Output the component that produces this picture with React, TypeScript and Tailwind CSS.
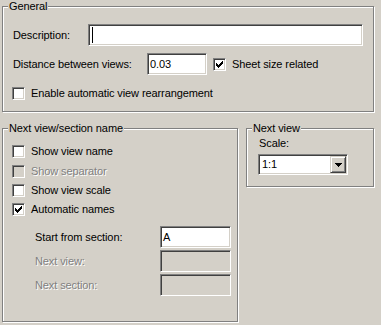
import React from 'react';

const sunken =
  'border border-t-[#808080] border-l-[#808080] border-r-white border-b-white shadow-[inset_1px_1px_0_#404040,inset_-1px_-1px_0_#d4d0c8]';
const etched = 'border border-[#808080] shadow-[inset_1px_1px_0_#fff,1px_1px_0_#fff]';
const disabledText = 'text-[#808080] [text-shadow:1px_1px_0_#fff]';

const Group: React.FC<{ title: string; className?: string; children?: React.ReactNode }> = ({
  title,
  className = '',
  children,
}) => (
  <div className={`relative shrink-0 ${etched} ${className}`}>
    <span className="absolute left-[5px] top-[-7px] px-[1px] bg-[#d4d0c8] leading-[13px]">{title}</span>
    {children}
  </div>
);

const Checkbox: React.FC<{ checked?: boolean; disabled?: boolean; label: string; className?: string }> = ({
  checked,
  disabled,
  label,
  className = '',
}) => (
  <div className={`flex items-center h-[13px] ${className}`}>
    <div className={`relative w-[13px] h-[13px] shrink-0 ${sunken} ${disabled ? 'bg-[#d4d0c8]' : 'bg-white'}`}>
      {checked && (
        <svg className="absolute left-0 top-0" width="11" height="11" viewBox="0 0 11 11" shapeRendering="crispEdges">
          <rect x="2" y="4" width="1" height="3" fill="#000" />
          <rect x="3" y="5" width="1" height="3" fill="#000" />
          <rect x="4" y="6" width="1" height="3" fill="#000" />
          <rect x="5" y="5" width="1" height="3" fill="#000" />
          <rect x="6" y="4" width="1" height="3" fill="#000" />
          <rect x="7" y="3" width="1" height="3" fill="#000" />
          <rect x="8" y="2" width="1" height="3" fill="#000" />
        </svg>
      )}
    </div>
    <span className={`ml-[6px] whitespace-nowrap ${disabled ? disabledText : ''}`}>{label}</span>
  </div>
);

const TextBox: React.FC<{ value?: string; disabled?: boolean; className?: string; caret?: boolean }> = ({
  value = '',
  disabled,
  className = '',
  caret,
}) => (
  <div
    className={`flex items-center h-[22px] px-[2px] shrink-0 ${sunken} ${disabled ? 'bg-[#d4d0c8]' : 'bg-white'} ${className}`}
  >
    {caret && <div className="w-[1px] h-[16px] bg-black ml-[1px]" />}
    <span>{value}</span>
  </div>
);

export default function App() {
  return (
    <div className="w-[381px] h-[325px] bg-[#d4d0c8] pt-[6px] pl-[2px] font-['Liberation_Sans',Arial,sans-serif] text-[11px] leading-[13px] tracking-[-0.1px] text-black overflow-hidden">
      <Group title="General" className="w-[372px] h-[106px]">
        <div className="flex items-center mt-[17px] ml-[10px]">
          <span className="w-[75px]">Description:</span>
          <TextBox caret className="w-[275px]" />
        </div>
        <div className="flex items-center mt-[7px] ml-[10px]">
          <span className="w-[134px] whitespace-nowrap">Distance between views:</span>
          <TextBox value="0.03" className="w-[60px]" />
          <Checkbox checked label="Sheet size related" className="ml-[6px]" />
        </div>
        <Checkbox label="Enable automatic view rearrangement" className="mt-[12px] ml-[9px]" />
      </Group>

      <div className="flex items-start gap-[8px] mt-[16px]">
        <Group title="Next view/section name" className="w-[236px] h-[194px]">
          <div className="flex flex-col ml-[9px] mt-[16px]">
            <Checkbox label="Show view name" />
            <Checkbox disabled label="Show separator" className="mt-[7px]" />
            <Checkbox label="Show view scale" className="mt-[6px]" />
            <Checkbox checked label="Automatic names" className="mt-[6px]" />
          </div>
          <div className="flex flex-col gap-[2px] mt-[10px] ml-[32px]">
            <div className="flex items-center">
              <span className="w-[125px]">Start from section:</span>
              <TextBox value="A" className="w-[71px]" />
            </div>
            <div className="flex items-center">
              <span className={`w-[125px] ${disabledText}`}>Next view:</span>
              <TextBox disabled className="w-[71px]" />
            </div>
            <div className="flex items-center">
              <span className={`w-[125px] ${disabledText}`}>Next section:</span>
              <TextBox disabled className="w-[71px]" />
            </div>
          </div>
        </Group>

        <Group title="Next view" className="w-[128px] h-[59px]">
          <div className="mt-[8px] ml-[12px]">Scale:</div>
          <div className={`flex items-center mt-[4px] ml-[11px] w-[90px] h-[21px] bg-white ${sunken}`}>
            <span className="flex-1 pl-[3px]">1:1</span>
            <div className="flex items-center justify-center w-[16px] h-[17px] mr-[1px] bg-[#d4d0c8] border border-t-[#d4d0c8] border-l-[#d4d0c8] border-r-[#404040] border-b-[#404040] shadow-[inset_1px_1px_0_#fff,inset_-1px_-1px_0_#808080]">
              <svg width="7" height="4" viewBox="0 0 7 4" shapeRendering="crispEdges">
                <rect x="0" y="0" width="7" height="1" fill="#000" />
                <rect x="1" y="1" width="5" height="1" fill="#000" />
                <rect x="2" y="2" width="3" height="1" fill="#000" />
                <rect x="3" y="3" width="1" height="1" fill="#000" />
              </svg>
            </div>
          </div>
        </Group>
      </div>
    </div>
  );
}
